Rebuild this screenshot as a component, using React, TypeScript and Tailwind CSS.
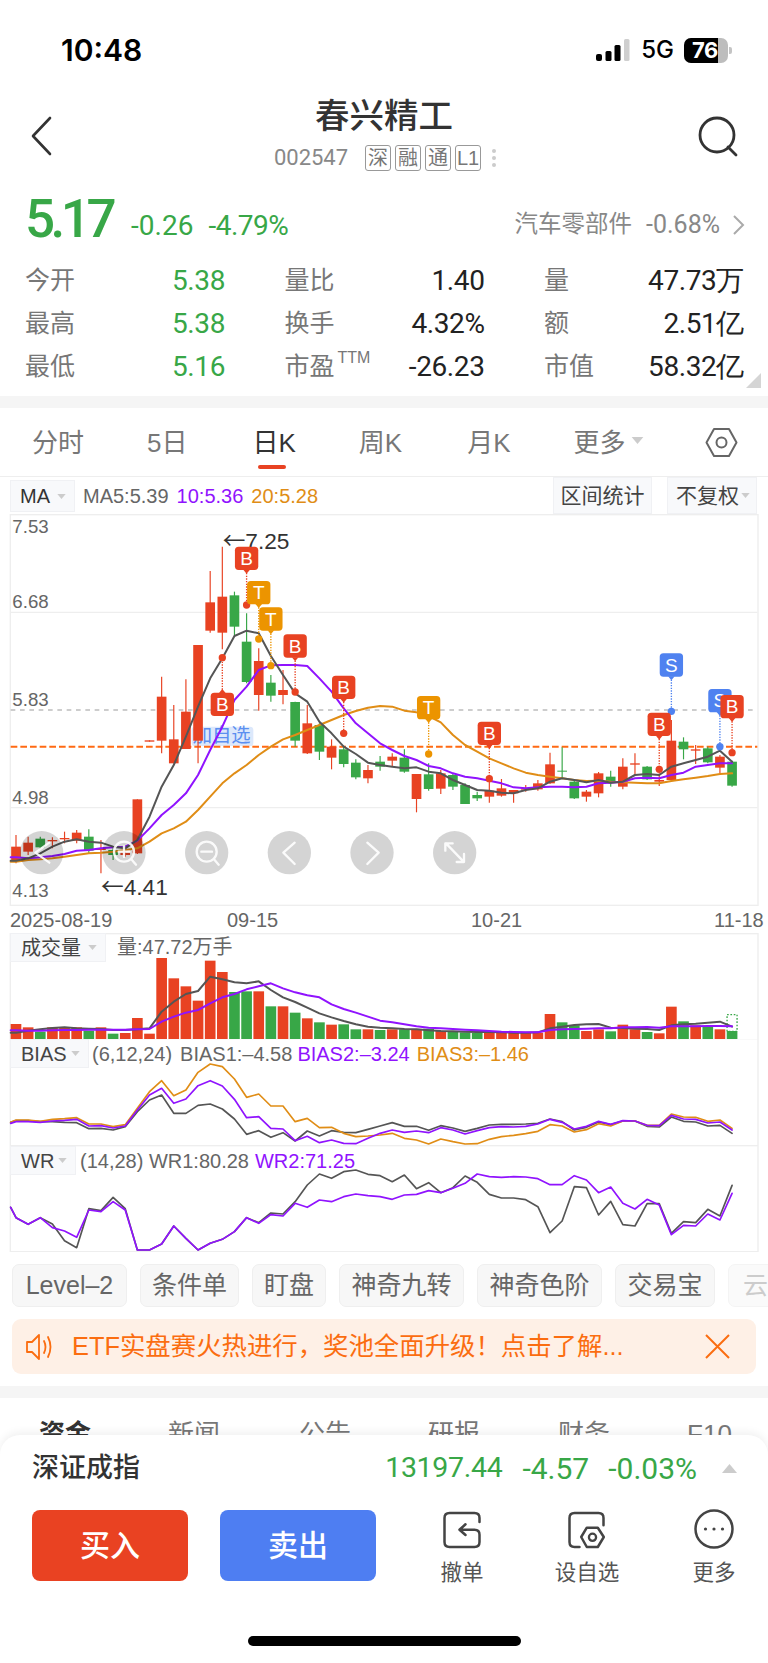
import React from "react";

const CJK = "font-['Liberation_Sans','Noto_Sans_CJK_SC',sans-serif]";

const RED = "#e84222";
const GREEN = "#38a747";
const ORANGE = "#ec9400";
const BLUE = "#4f82f0";
const PURPLE = "#9013fe";
const AMBER = "#e08d16";
const GRAY = "#555555";

const cx = (i: number) => 48 + 36.41 * i;

// 蜡烛图数据: [open, close, high, low, up]
type Candle = [number, number, number, number, number];
const candles: Candle[] = [
  [1340, 1380, 1305, 1390, 1], [1328, 1355, 1310, 1365, 1], [1316, 1342, 1310, 1348, 0], [1320, 1324, 1312, 1345, 1],
  [1314, 1318, 1295, 1330, 1], [1298, 1322, 1290, 1330, 1], [1310, 1352, 1288, 1360, 0], [1345, 1350, 1320, 1420, 1],
  [1350, 1365, 1340, 1380, 0], [1358, 1365, 1340, 1370, 1], [1198, 1360, 1198, 1362, 1], [1021, 1025, 1021, 1025, 1],
  [890, 1022, 830, 1060, 1], [1018, 1090, 915, 1090, 1], [935, 1047, 838, 1047, 1], [735, 1022, 735, 1090, 1],
  [607, 692, 513, 698, 1], [590, 698, 440, 748, 1], [586, 680, 575, 710, 0], [725, 846, 640, 850, 0],
  [783, 885, 745, 932, 1], [848, 887, 825, 905, 0], [870, 885, 810, 913, 1], [906, 1022, 905, 1040, 0],
  [970, 1060, 915, 1062, 1], [975, 1055, 970, 1080, 0], [1040, 1073, 1018, 1108, 1], [1048, 1092, 1040, 1102, 0],
  [1088, 1132, 1078, 1138, 0], [1110, 1135, 1095, 1150, 1], [1085, 1100, 1068, 1112, 0], [1070, 1082, 1060, 1100, 1],
  [1073, 1115, 1048, 1118, 0], [1122, 1197, 1122, 1237, 1], [1123, 1167, 1090, 1172, 0], [1120, 1166, 1110, 1182, 1],
  [1125, 1160, 1120, 1170, 0], [1155, 1212, 1150, 1212, 0], [1185, 1195, 1175, 1203, 0], [1172, 1190, 1130, 1208, 1],
  [1165, 1187, 1137, 1190, 1], [1170, 1180, 1170, 1208, 1], [1165, 1169, 1155, 1175, 1], [1150, 1168, 1140, 1172, 1],
  [1093, 1150, 1058, 1152, 1], [1112, 1115, 1042, 1135, 0], [1145, 1195, 1140, 1197, 0], [1175, 1190, 1170, 1205, 1],
  [1120, 1180, 1116, 1192, 1], [1130, 1145, 1112, 1160, 0], [1100, 1160, 1075, 1168, 1], [1090, 1094, 1060, 1125, 1],
  [1100, 1138, 1098, 1140, 0], [1140, 1145, 1120, 1158, 1], [1022, 1140, 960, 1142, 1], [1025, 1048, 1012, 1078, 0],
  [1048, 1052, 1035, 1092, 1], [1045, 1087, 1040, 1090, 0], [1070, 1103, 1065, 1120, 1], [1085, 1157, 1082, 1160, 0],
];

const ma5 = [1382, 1375, 1360, 1340, 1325, 1318, 1325, 1328, 1340, 1345, 1320, 1250, 1160, 1095, 1010, 920, 835, 775, 708, 692, 700, 768, 825, 880, 905, 965, 1000, 1040, 1062, 1088, 1095, 1100, 1105, 1102, 1115, 1120, 1140, 1155, 1170, 1172, 1178, 1180, 1170, 1165, 1145, 1135, 1140, 1147, 1140, 1148, 1145, 1125, 1122, 1125, 1100, 1090, 1080, 1070, 1052, 1085];
const ma10 = [1372, 1375, 1372, 1368, 1362, 1352, 1350, 1345, 1342, 1340, 1322, 1285, 1245, 1215, 1180, 1125, 1050, 980, 900, 860, 810, 796, 795, 795, 798, 835, 875, 925, 970, 1000, 1030, 1050, 1068, 1080, 1098, 1105, 1120, 1130, 1135, 1142, 1150, 1162, 1165, 1162, 1160, 1160, 1162, 1160, 1150, 1148, 1145, 1135, 1133, 1135, 1125, 1118, 1100, 1095, 1090, 1090];
const ma20 = [1385, 1380, 1378, 1375, 1370, 1365, 1360, 1358, 1355, 1350, 1345, 1325, 1300, 1285, 1265, 1230, 1190, 1150, 1120, 1095, 1065, 1040, 1018, 1005, 990, 975, 960, 945, 933, 923, 918, 920, 932, 937, 948, 967, 1005, 1035, 1055, 1075, 1090, 1105, 1118, 1125, 1130, 1135, 1140, 1143, 1142, 1145, 1147, 1148, 1150, 1150, 1143, 1138, 1133, 1128, 1122, 1120];

// 成交量
const volumes: [number, number][] = [
  [312, 1], [322, 1], [335, 0], [322, 1], [322, 1], [322, 1], [332, 0], [322, 1], [341, 0], [339, 1], [294, 1], [341, 1],
  [114, 1], [175, 1], [199, 1], [242, 1], [122, 1], [156, 1], [216, 0], [214, 0], [214, 1], [259, 0], [259, 1], [278, 0],
  [295, 1], [307, 0], [314, 1], [313, 0], [328, 0], [328, 1], [330, 0], [328, 1], [328, 0], [328, 1], [326, 0], [333, 1],
  [336, 0], [337, 0], [339, 0], [338, 1], [338, 1], [339, 1], [339, 1], [338, 1], [282, 1], [307, 0], [316, 0], [333, 1],
  [328, 1], [334, 0], [314, 1], [328, 1], [336, 0], [340, 1], [260, 1], [304, 0], [316, 1], [318, 0], [328, 1], [333, 0],
];
const volGray = [338, 332, 328, 324, 322, 325, 326, 327, 330, 330, 328, 325, 275, 245, 222, 213, 170, 178, 187, 190, 184, 210, 232, 246, 263, 280, 292, 303, 313, 320, 323, 325, 327, 328, 331, 333, 334, 335, 336, 336, 337, 338, 338, 337, 325, 320, 315, 313, 312, 323, 324, 326, 327, 330, 316, 313, 311, 308, 305, 320];
const volPurple = [331, 332, 332, 331, 330, 330, 329, 329, 329, 329, 328, 327, 305, 290, 278, 270, 250, 232, 222, 208, 199, 190, 205, 217, 226, 232, 253, 267, 278, 290, 302, 307, 313, 319, 323, 325, 327, 329, 331, 333, 335, 336, 337, 337, 330, 328, 327, 326, 325, 325, 322, 322, 321, 323, 319, 319, 319, 318, 318, 319];

const biasGray = [602, 602, 605, 605, 607, 608, 626, 625, 630, 620, 575, 540, 525, 580, 580, 556, 552, 567, 597, 643, 632, 652, 638, 663, 633, 648, 632, 637, 638, 628, 618, 608, 619, 619, 631, 617, 624, 634, 625, 615, 613, 613, 612, 610, 597, 605, 630, 622, 606, 614, 603, 603, 619, 621, 591, 604, 606, 618, 616, 640];
const biasPurple = [605, 605, 607, 603, 601, 598, 618, 617, 624, 618, 570, 525, 505, 550, 537, 497, 482, 498, 538, 593, 590, 625, 627, 662, 649, 668, 660, 670, 671, 655, 640, 630, 637, 633, 638, 623, 630, 642, 632, 623, 620, 621, 619, 612, 598, 607, 627, 619, 604, 613, 602, 603, 616, 617, 586, 597, 598, 609, 606, 630];
const biasAmber = [600, 600, 604, 598, 596, 593, 612, 612, 620, 614, 565, 515, 482, 527, 510, 457, 432, 440, 477, 532, 522, 558, 558, 605, 595, 623, 622, 640, 650, 648, 645, 640, 655, 660, 672, 657, 665, 672, 671, 658, 650, 646, 641, 634, 614, 618, 636, 629, 611, 618, 603, 603, 616, 616, 582, 591, 592, 604, 600, 625];

const wrGray = [893, 913, 893, 912, 962, 983, 866, 872, 832, 866, 990, 990, 972, 918, 955, 990, 970, 958, 935, 893, 908, 879, 882, 845, 795, 762, 775, 755, 750, 763, 767, 785, 765, 806, 788, 818, 803, 768, 787, 823, 834, 834, 839, 860, 938, 903, 800, 803, 885, 844, 914, 918, 851, 851, 940, 905, 908, 868, 888, 796];
const wrPurple = [893, 913, 893, 923, 933, 952, 870, 875, 845, 870, 990, 990, 972, 918, 955, 990, 970, 958, 935, 893, 910, 884, 888, 850, 862, 840, 845, 830, 822, 827, 830, 838, 825, 823, 812, 818, 805, 790, 762, 770, 772, 770, 771, 776, 794, 794, 767, 780, 818, 801, 850, 867, 838, 855, 944, 916, 918, 882, 900, 820];

// 买卖点标记: 字母, 蜡烛序号, 徽标中心y, 圆点y
const markers: [string, number, number, number][] = [
  ["B", 19, 475, 615], ["T", 20, 578, 717], ["T", 21, 657, 797], ["B", 17, 913, 773], ["B", 23, 738, 876],
  ["B", 27, 862, 1000], ["T", 34, 923, 1062], ["B", 39, 1000, 1136], ["S", 54, 795, 934], ["B", 53, 973, 1108],
  ["S", 58, 902, 1040], ["B", 59, 920, 1058],
];

function line(ys: number[], start?: number) {
  const head = `M32 ${start ?? ys[0]}`;
  return head + ys.map((y, i) => ` L${cx(i).toFixed(1)} ${y}`).join("");
}

function Poly({ d, color, w = 6 }: { d: string; color: string; w?: number }) {
  return <path d={d} fill="none" stroke={color} strokeWidth={w} strokeLinejoin="round" strokeLinecap="round" />;
}

function Marker({ m }: { m: [string, number, number, number] }) {
  const [ch, i, by, dy] = m;
  const x = cx(i);
  const color = ch === "B" ? RED : ch === "T" ? ORANGE : BLUE;
  const below = dy > by;
  const tail = below ? by + 44 : by - 44;
  return (
    <g>
      <line x1={x} y1={tail} x2={x} y2={dy} stroke={color} strokeWidth={4} strokeDasharray="4 4" />
      <circle cx={x} cy={dy} r={11} fill={color} />
      <rect x={x - 35} y={by - 35} width={70} height={70} rx={11} fill={color} />
      <path d={below ? `M${x - 10} ${by + 34} L${x} ${by + 46} L${x + 10} ${by + 34}Z` : `M${x - 10} ${by - 34} L${x} ${by - 46} L${x + 10} ${by - 34}Z`} fill={color} />
      <text x={x} y={by + 20} textAnchor="middle" fill="#fff" fontSize={57} fontFamily="Liberation Sans">{ch}</text>
    </g>
  );
}

function NavCircle({ x, children }: { x: number; children: React.ReactNode }) {
  return (
    <g>
      <circle cx={x} cy={1358} r={65} fill="#000" opacity={0.17} />
      <g fill="none" stroke="#fff" strokeWidth={7} strokeLinecap="round" strokeLinejoin="round" opacity={0.9}>
        {children}
      </g>
    </g>
  );
}

function PriceTag({ x, y, value }: { x: number; y: number; value: string }) {
  return (
    <text x={x} y={y} fill="#333" fontSize={68} fontFamily="Liberation Sans">
      <tspan fontFamily="Noto Sans CJK SC">←</tspan>
      <tspan>{value}</tspan>
    </text>
  );
}

function MainChart() {
  const yLabels: [string, number][] = [["7.53", 400], ["6.68", 623], ["5.83", 917], ["4.98", 1212], ["4.13", 1492]];
  return (
    <svg className="absolute inset-0" width={768} height={392} viewBox="0 342 2304 1176">
      <rect x={31} y={344} width={2243} height={1172} fill="none" stroke="#eeeeee" strokeWidth={4} />
      <line x1={32} y1={637} x2={2272} y2={637} stroke="#eeeeee" strokeWidth={4} />
      <line x1={32} y1={1223} x2={2272} y2={1223} stroke="#eeeeee" strokeWidth={4} />
      <line x1={32} y1={930} x2={2272} y2={930} stroke="#bdbdbd" strokeWidth={4} strokeDasharray="14 14" />
      {yLabels.map(([t, y]) => (
        <text key={t} x={37} y={y} fill="#666" fontSize={56} fontFamily="Liberation Sans">{t}</text>
      ))}
      <rect x={575} y={980} width={185} height={58} rx={10} fill="#dce8fb" />
      <text x={578} y={1027} fill="#5b8ff0" fontSize={58} fontFamily="Liberation Sans, Noto Sans CJK SC, sans-serif">加自选</text>
      <line x1={32} y1={1040} x2={2272} y2={1040} stroke="#ff6a13" strokeWidth={6} strokeDasharray="20 9" />
      {candles.map(([o, c, h, l, up], i) => {
        const color = up ? RED : GREEN;
        return (
          <g key={i}>
            <line x1={cx(i)} y1={h} x2={cx(i)} y2={l} stroke={color} strokeWidth={3.5} />
            <rect x={cx(i) - 14.5} y={o} width={29} height={c - o} fill={color} />
          </g>
        );
      })}
      <PriceTag x={303} y={1484} value="4.41" />
      <PriceTag x={668} y={446} value="7.25" />
      <Poly d={line(ma20)} color={AMBER} />
      <Poly d={line(ma10)} color={PURPLE} />
      <Poly d={line(ma5)} color={GRAY} />
      {markers.map((m, i) => (
        <Marker key={i} m={m} />
      ))}
      <NavCircle x={125}>
        <path d="M148 1328 L106 1358 L148 1388" />
      </NavCircle>
      <NavCircle x={372}>
        <circle cx={372} cy={1355} r={30} />
        <path d="M394 1378 L408 1394 M356 1355 H388 M372 1339 V1371" />
      </NavCircle>
      <NavCircle x={620}>
        <circle cx={620} cy={1355} r={30} />
        <path d="M642 1378 L656 1394 M604 1355 H636" />
      </NavCircle>
      <NavCircle x={868}>
        <path d="M884 1328 L850 1358 L884 1392" />
      </NavCircle>
      <NavCircle x={1116}>
        <path d="M1102 1328 L1136 1358 L1102 1392" />
      </NavCircle>
      <NavCircle x={1364}>
        <path d="M1338 1330 L1390 1384 M1336 1352 V1330 H1358 M1392 1362 V1386 H1370" />
      </NavCircle>
    </svg>
  );
}

function VolumeChart() {
  return (
    <svg className="absolute inset-0" width={768} height={106} viewBox="0 39 2304 318">
      <rect x={31} y={41} width={2243} height={318} fill="none" stroke="#eeeeee" strokeWidth={4} />
      {volumes.map(([top, up], i) => (
        <rect key={i} x={cx(i) - 16} y={top} width={32} height={358 - top} fill={up ? RED : GREEN} />
      ))}
      <rect x={cx(59) - 15} y={284} width={30} height={50} fill="none" stroke={GREEN} strokeWidth={4} strokeDasharray="5 5" />
      <Poly d={line(volGray)} color={GRAY} />
      <Poly d={line(volPurple)} color={PURPLE} />
    </svg>
  );
}

function BiasChart() {
  return (
    <svg className="absolute inset-0" width={768} height={107} viewBox="0 357 2304 321">
      <rect x={31} y={356} width={2243} height={321} fill="none" stroke="#eeeeee" strokeWidth={4} />
      <Poly d={line(biasGray, 607)} color={GRAY} w={5} />
      <Poly d={line(biasAmber, 607)} color={AMBER} w={5} />
      <Poly d={line(biasPurple, 610)} color={PURPLE} w={5} />
    </svg>
  );
}

function WrChart() {
  return (
    <svg className="absolute inset-0" width={768} height={106} viewBox="0 678 2304 318">
      <rect x={31} y={677} width={2243} height={318} fill="none" stroke="#eeeeee" strokeWidth={4} />
      <Poly d={line(wrGray, 862)} color={GRAY} w={5} />
      <Poly d={line(wrPurple, 862)} color={PURPLE} w={5} />
    </svg>
  );
}

function Caret({ color = "#cccccc", w = 9, h = 5 }: { color?: string; w?: number; h?: number }) {
  return (
    <svg width={w} height={h} viewBox="0 0 10 6" className="shrink-0">
      <path d="M0 0H10L5 6Z" fill={color} />
    </svg>
  );
}

function ChartTag({ label, w, h = "h-[29px]" }: { label: string; w: string; h?: string }) {
  return (
    <div className={`absolute left-[10px] top-0 flex ${w} ${h} items-center justify-between border border-[#f0f1f4] bg-[#f8f9fb] pl-[10px] pr-[8px] text-[20px] text-[#444]`}>
      <span>{label}</span>
      <Caret />
    </div>
  );
}

function Chip({ label, w }: { label: string; w: string }) {
  return (
    <div className={`flex h-[43px] ${w} shrink-0 items-center justify-center rounded-[7px] border border-[#efefef] bg-[#f7f7f7] text-[25px] text-[#666]`}>
      {label}
    </div>
  );
}

function QuoteCell({ label, value, green, sup }: { label: string; value: string; green?: boolean; sup?: boolean }) {
  return (
    <div className="flex items-center justify-between">
      <span className="relative text-[25px] text-[#777]">
        {label}
        {sup && <span className="absolute left-[53px] top-[-2px] text-[16px]">TTM</span>}
      </span>
      <span className={`font-['Roboto',sans-serif] text-[28px] tracking-[-0.4px] ${green ? "text-[#38a747]" : "text-[#222]"}`}>
        {value}
      </span>
    </div>
  );
}

function ActionItem({ icon, label, w }: { icon: React.ReactNode; label: string; w: string }) {
  return (
    <div className={`flex ${w} flex-col items-center`}>
      {icon}
      <span className="mt-[12px] text-[21.5px] leading-[24px] text-[#555]">{label}</span>
    </div>
  );
}

export default function App() {
  const tabs = ["分时", "5日", "日K", "周K", "月K"];
  const tabPad = ["ml-[32px]", "ml-[63px]", "ml-[65px]", "ml-[63px]", "ml-[65px]"];
  const quoteRows = [
    [["今开", "5.38", true], ["量比", "1.40"], ["量", "47.73万"]],
    [["最高", "5.38", true], ["换手", "4.32%"], ["额", "2.51亿"]],
    [["最低", "5.16", true], ["市盈", "-26.23"], ["市值", "58.32亿"]],
  ];
  return (
    <div className={`relative h-[1663px] w-[768px] overflow-hidden bg-white ${CJK}`}>
      {/* 状态栏 */}
      <div className="flex h-[96px] items-center justify-between pl-[61px] pr-[36px] pt-[4px]">
        <span className="font-['Inter',sans-serif] text-[30px] font-semibold text-black">10:48</span>
        <div className="flex items-center">
          <svg width={34} height={22} viewBox="0 0 34 22">
            <rect x={0} y={15} width={6} height={7} rx={2} fill="#000" />
            <rect x={9.5} y={12} width={6} height={10} rx={1.5} fill="#000" />
            <rect x={18.5} y={6} width={6} height={16} rx={1.5} fill="#000" />
            <rect x={28} y={0} width={5.5} height={22} rx={1.5} fill="#cfcfcf" />
          </svg>
          <span className="ml-[11px] font-['Inter',sans-serif] text-[24px] font-medium text-black">5G</span>
          <div className="relative ml-[10px] flex h-[25px] w-[44px] items-center overflow-hidden rounded-[7px] bg-[#bdbdbd]">
            <div className="absolute inset-y-0 left-0 w-[34px] bg-black" />
            <span className="relative ml-[8px] font-['Inter',sans-serif] text-[22px] font-bold leading-none tracking-[-0.5px] text-white">76</span>
          </div>
          <div className="ml-[1px] h-[7px] w-[3px] rounded-r-[2px] bg-[#c4c4c4]" />
        </div>
      </div>

      {/* 标题 */}
      <div className="relative h-[84px]">
        <svg className="absolute left-[30px] top-[20px]" width={22} height={40} viewBox="0 0 22 40">
          <path d="M20 2 L3 20 L20 38" fill="none" stroke="#333" strokeWidth={2.6} strokeLinecap="round" strokeLinejoin="round" />
        </svg>
        <svg className="absolute left-[697px] top-[19px]" width={42} height={42} viewBox="0 0 42 42">
          <circle cx={20} cy={20} r={17} fill="none" stroke="#333" strokeWidth={2.8} />
          <path d="M31 32 L39 40" stroke="#333" strokeWidth={2.8} strokeLinecap="round" />
        </svg>
        <div className="text-center text-[34.5px] font-medium leading-[40px] text-[#333]">春兴精工</div>
        <div className="mt-[9px] flex items-center justify-center pl-[2px]">
          <span className="mr-[17px] font-['Roboto',sans-serif] text-[22px] leading-[26px] text-[#888]">002547</span>
          <div className="flex gap-[4px]">
            {["深", "融", "通", "L1"].map((t) => (
              <span key={t} className="flex h-[26px] w-[26px] items-center justify-center rounded-[3px] border border-[#999] text-[20px] leading-none text-[#777]">
                {t}
              </span>
            ))}
          </div>
          <div className="ml-[11px] flex flex-col gap-[3px]">
            <span className="h-[4px] w-[4px] rounded-full bg-[#ccc]" />
            <span className="h-[4px] w-[4px] rounded-full bg-[#ccc]" />
            <span className="h-[4px] w-[4px] rounded-full bg-[#ccc]" />
          </div>
        </div>
      </div>

      {/* 现价 */}
      <div className="flex h-[79px] items-center pl-[25px] pr-[23px] font-['Roboto',sans-serif]">
        <span className="text-[53px] font-medium leading-none tracking-[-4.5px] text-[#38a747]">5.17</span>
        <span className="ml-[19px] mt-[12px] text-[28px] text-[#38a747]">-0.26</span>
        <span className="ml-[15px] mt-[12px] text-[28px] tracking-[-0.5px] text-[#38a747]">-4.79%</span>
        <span className={`ml-auto mt-[10px] text-[23.5px] text-[#888] ${CJK}`}>汽车零部件</span>
        <span className="ml-[14px] mt-[10px] text-[25px] text-[#888]">-0.68%</span>
        <svg className="ml-[12px] mt-[10px]" width={13} height={22} viewBox="0 0 13 22">
          <path d="M2 2 L11 11 L2 20" fill="none" stroke="#aaa" strokeWidth={2} />
        </svg>
      </div>

      {/* 行情数据 */}
      <div className="relative h-[137px] pl-[25px]">
        {quoteRows.map((row, r) => (
          <div key={r} className="grid h-[43px] w-[719px] grid-cols-[200px_200px_200px] gap-x-[59.5px]">
            {row.map(([label, value, green]) => (
              <QuoteCell key={label as string} label={label as string} value={value as string} green={!!green} sup={label === "市盈"} />
            ))}
          </div>
        ))}
        <svg className="absolute bottom-[8px] right-[7px]" width={15} height={15} viewBox="0 0 15 15">
          <path d="M15 0 V15 H0Z" fill="#d5d5d5" />
        </svg>
      </div>

      <div className="h-[12px] bg-[#f5f5f5]" />

      {/* K线周期 */}
      <div className="relative flex h-[69px] items-center border-b border-[#eeeeee] pt-[3px] text-[26px] text-[#777]">
        {tabs.map((t, i) => (
          <span key={t} className={`${tabPad[i]} ${t === "日K" ? "text-[#333]" : ""}`}>{t}</span>
        ))}
        <span className="ml-[63px]">更多</span>
        <span className="ml-[5px] mb-[6px]"><Caret w={13} h={7} /></span>
        <div className="absolute bottom-[7px] left-[258px] h-[4px] w-[28px] rounded-full bg-[#e84222]" />
        <svg className="absolute left-[705px] top-[19px]" width={33} height={31} viewBox="0 0 33 31">
          <path d="M9 2 H24 L31.5 15.5 L24 29 H9 L1.5 15.5Z" fill="none" stroke="#666" strokeWidth={2} strokeLinejoin="round" />
          <circle cx={16.5} cy={15.5} r={5} fill="none" stroke="#666" strokeWidth={2} />
        </svg>
      </div>

      {/* 均线工具栏 */}
      <div className="relative h-[37px] text-[20px]">
        <div className="absolute left-[10px] top-[3px] flex h-[32px] w-[65px] items-center justify-between border border-[#f0f1f4] bg-[#f8f9fb] pl-[9px] pr-[8px] text-[#333]">
          <span>MA</span>
          <Caret />
        </div>
        <div className="absolute left-[83px] top-[4px] flex h-[30px] items-center gap-[8px]">
          <span className="text-[#666]">MA5:5.39</span>
          <span className="text-[#9013fe]">10:5.36</span>
          <span className="text-[#e08d16]">20:5.28</span>
        </div>
        <div className="absolute left-[553px] top-0 flex h-[37px] w-[99px] items-center justify-center border border-[#f0f1f4] bg-[#f8f9fb] text-[21px] text-[#444]">
          区间统计
        </div>
        <div className="absolute left-[667px] top-0 flex h-[37px] w-[90px] items-center justify-between border border-[#f0f1f4] bg-[#f8f9fb] pl-[8px] pr-[6px] text-[21px] text-[#444]">
          <span>不复权</span>
          <Caret />
        </div>
      </div>

      {/* 主图 */}
      <div className="relative h-[392px]">
        <MainChart />
      </div>
      <div className="relative flex h-[27px] items-center text-[20px] leading-none text-[#666]">
        <span className="absolute left-[10px]">2025-08-19</span>
        <span className="absolute left-[227px]">09-15</span>
        <span className="absolute left-[471px]">10-21</span>
        <span className="absolute left-[714px]">11-18</span>
      </div>

      {/* 副图 */}
      <div className="relative h-[106px]">
        <VolumeChart />
        <ChartTag label="成交量" w="w-[96px]" />
        <div className="absolute left-[117px] top-0 h-[29px] text-[20px] leading-[29px] text-[#666]">量:47.72万手</div>
      </div>
      <div className="relative h-[107px]">
        <BiasChart />
        <ChartTag label="BIAS" w="w-[79px]" />
        <div className="absolute left-[92px] top-0 flex h-[29px] items-center text-[20px] text-[#666]">
          <span>(6,12,24)</span>
          <span className="ml-[8px]">BIAS1:–4.58</span>
          <span className="ml-[5px] text-[#9013fe]">BIAS2:–3.24</span>
          <span className="ml-[7px] text-[#e08d16]">BIAS3:–1.46</span>
        </div>
      </div>
      <div className="relative h-[106px]">
        <WrChart />
        <ChartTag label="WR" w="w-[66px]" />
        <div className="absolute left-[80px] top-0 flex h-[29px] items-center text-[20px] text-[#666]">
          <span>(14,28)&nbsp;WR1:80.28</span>
          <span className="ml-[6px] text-[#9013fe]">WR2:71.25</span>
        </div>
      </div>

      {/* 快捷入口 */}
      <div className="mt-[12px] flex h-[43px] gap-[13px] overflow-hidden pl-[12px]">
        <Chip label="Level–2" w="w-[115px]" />
        <Chip label="条件单" w="w-[99px]" />
        <Chip label="盯盘" w="w-[74px]" />
        <Chip label="神奇九转" w="w-[125px]" />
        <Chip label="神奇色阶" w="w-[125px]" />
        <Chip label="交易宝" w="w-[100px]" />
        <div className="flex h-[43px] w-[60px] shrink-0 items-center rounded-[7px] border border-[#f4f4f4] bg-[#fafafa] pl-[14px] text-[25px] text-[#ccc]">云</div>
      </div>

      {/* 公告条 */}
      <div className="mx-[12px] mt-[12px] flex h-[55px] items-center rounded-[9px] bg-[#fef0e6] pl-[13px] pr-[26px]">
        <svg width={30} height={28} viewBox="0 0 30 28">
          <path d="M2 9 H7 L14 2 V26 L7 19 H2Z M19 8 Q22 14 19 20 M23 4 Q28 14 23 24" fill="none" stroke="#fb6d10" strokeWidth={1.8} strokeLinejoin="round" strokeLinecap="round" />
        </svg>
        <span className="ml-[17px] text-[25.4px] text-[#fb6d10]">ETF实盘赛火热进行，奖池全面升级！点击了解...</span>
        <svg className="ml-auto" width={25} height={25} viewBox="0 0 25 25">
          <path d="M1 1 L24 24 M24 1 L1 24" stroke="#fb6d10" strokeWidth={2} />
        </svg>
      </div>

      <div className="mt-[12px] h-[12px] bg-[#f5f5f5]" />
      <div className="flex pt-[17px] text-[26px] text-[#777]">
        <span className="ml-[39px] font-bold text-[#333]">资金</span>
        <span className="ml-[77px]">新闻</span>
        <span className="ml-[79px]">公告</span>
        <span className="ml-[77px]">研报</span>
        <span className="ml-[78px]">财务</span>
        <span className="ml-[77px]">F10</span>
      </div>

      {/* 底部操作面板 */}
      <div className="absolute inset-x-0 bottom-0 h-[228px] rounded-t-[20px] bg-white px-[32px] shadow-[0_-3px_8px_rgba(0,0,0,0.06)]">
        <div className="flex h-[66px] items-center">
          <span className="text-[27px] font-medium text-[#333]">深证成指</span>
          <span className="ml-auto font-['Roboto',sans-serif] text-[28.5px] tracking-[-0.3px] text-[#38a747]">13197.44</span>
          <span className="ml-[20px] font-['Roboto',sans-serif] text-[30px] text-[#38a747]">-4.57</span>
          <span className="ml-[19px] font-['Roboto',sans-serif] text-[30px] text-[#38a747]">-0.03%</span>
          <svg className="ml-[25px] mr-[-1px]" width={15} height={9} viewBox="0 0 15 9">
            <path d="M0 9 L7.5 0 L15 9Z" fill="#ccc" />
          </svg>
        </div>
        <div className="mt-[9px] flex">
          <div className="flex h-[71px] w-[157px] items-center justify-center rounded-[8px] bg-[#e94222] text-[30px] font-medium text-white">买入</div>
          <div className="ml-[32px] flex h-[71px] w-[157px] items-center justify-center rounded-[8px] bg-[#4e7ef2] text-[30px] font-medium text-white">卖出</div>
          <div className="ml-[64px] flex">
            <ActionItem
              w="w-[44px]"
              label="撤单"
              icon={
                <svg width={38} height={38} viewBox="0 0 38 38" className="mt-[1px]">
                  <path d="M36.5 11 V7 Q36.5 2 31.5 2 H6.5 Q1.5 2 1.5 7 V31 Q1.5 36 6.5 36 H31.5 Q36.5 36 36.5 31 V23.7 Q36.5 18.7 31.5 18.7 H16.5 M22.5 13.3 L16.5 18.7 L22.5 24" fill="none" stroke="#444" strokeWidth={2.5} strokeLinecap="round" strokeLinejoin="round" />
                </svg>
              }
            />
            <div className="ml-[70px]">
              <ActionItem
                w="w-[66px]"
                label="设自选"
                icon={
                  <svg width={38} height={38} viewBox="0 0 38 38" className="mt-[1px]">
                    <path d="M11.5 36 H6.5 Q1.5 36 1.5 31 V7 Q1.5 2 6.5 2 H30.5 Q35.5 2 35.5 7 V14.3" fill="none" stroke="#444" strokeWidth={2.5} strokeLinecap="round" />
                    <path d="M13.2 26 L18.8 16.7 H29.8 L35.8 26 L29.8 36 H18.8Z" fill="none" stroke="#444" strokeWidth={2.5} strokeLinejoin="round" />
                    <circle cx={24.5} cy={26.3} r={3.6} fill="none" stroke="#444" strokeWidth={2.3} />
                  </svg>
                }
              />
            </div>
            <div className="ml-[72px]">
              <ActionItem
                w="w-[44px]"
                label="更多"
                icon={
                  <svg width={40} height={40} viewBox="0 0 40 40" className="mt-[-1px]">
                    <circle cx={20} cy={20} r={18.5} fill="none" stroke="#444" strokeWidth={2.5} />
                    <circle cx={11.5} cy={20} r={1.6} fill="#444" />
                    <circle cx={20} cy={20} r={1.6} fill="#444" />
                    <circle cx={28.5} cy={20} r={1.6} fill="#444" />
                  </svg>
                }
              />
            </div>
          </div>
        </div>
      </div>

      {/* Home 指示条 */}
      <div className="absolute bottom-[17px] left-[248px] h-[10px] w-[273px] rounded-full bg-black" />
    </div>
  );
}
